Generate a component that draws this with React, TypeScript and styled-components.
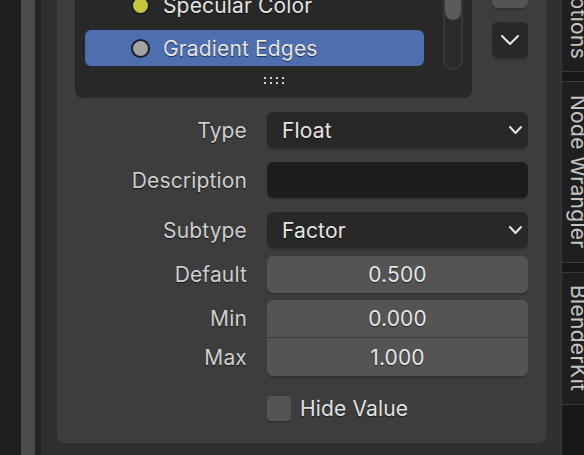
import React from 'react';
import styled, { createGlobalStyle } from 'styled-components';

const Global = createGlobalStyle`
  html, body { margin: 0; padding: 0; background: #303030; overflow: hidden; }
  body { font-family: Inter, "DejaVu Sans", sans-serif; letter-spacing: 0.15px; }
  * { box-sizing: border-box; }
`;

const Screen = styled.div`
  display: flex;
  width: 584px;
  height: 455px;
  overflow: hidden;
  background: #303030;
`;

const Strip = styled.div<{ $w: number; $c: string }>`
  flex-shrink: 0;
  width: ${p => p.$w}px;
  background: ${p => p.$c};
`;

const Region = styled.div`
  flex: 1;
  min-width: 0;
  background: #303030;
  padding: 0 15px 0 16px;
`;

const Panel = styled.section`
  margin-top: -40px;
  background: #3d3d3d;
  border-radius: 0 0 8px 8px;
  padding: 0 18px 22px;
  display: flex;
  flex-direction: column;
`;

const ListSection = styled.div`
  display: flex;
  gap: 20px;
  align-items: flex-start;
`;

const ListBox = styled.div`
  width: 397px;
  background: #282828;
  border-radius: 0 0 8px 8px;
  padding: 27px 9px 0 10px;
  display: flex;
  flex-direction: column;
`;

const ListBody = styled.div`
  display: flex;
  align-items: flex-start;
`;

const Rows = styled.div`
  width: 339px;
  display: flex;
  flex-direction: column;
  gap: 7px;
`;

const Row = styled.div<{ $active?: boolean }>`
  height: 36px;
  border-radius: 6px;
  background: ${p => (p.$active ? '#4e6faf' : 'transparent')};
  display: flex;
  align-items: center;
  padding-left: 46px;
  gap: 13px;
  font-size: 21px;
  color: #e4e4e4;
  text-shadow: 0 1px 1px rgba(0, 0, 0, 0.6);
`;

const SocketDot = styled.span<{ $color: string }>`
  width: 19px;
  height: 19px;
  border-radius: 50%;
  background: ${p => p.$color};
  border: 2px solid #1a1f2a;
  flex-shrink: 0;
`;

const ScrollTrack = styled.div`
  margin-left: 19px;
  margin-bottom: -4px;
  width: 20px;
  height: 83px;
  border: 2px solid #383838;
  border-radius: 10px;
  background: #2a2a2a;
  display: flex;
  justify-content: center;
`;

const ScrollThumb = styled.div`
  width: 16px;
  height: 31px;
  background: #5a5a5a;
  border-radius: 0 0 8px 8px;
`;

const Grip = styled.div`
  height: 32px;
  display: flex;
  justify-content: center;
  padding-top: 10px;
`;

const SideButtons = styled.div`
  width: 36px;
  padding-top: 12px;
  display: flex;
  flex-direction: column;
  gap: 14px;
`;

const SideButton = styled.div<{ $bg: string }>`
  height: 36px;
  border-radius: 6px;
  background: ${p => p.$bg};
  box-shadow: 0 2px 1px rgba(0, 0, 0, 0.18);
  display: flex;
  align-items: center;
  justify-content: center;
`;

const Form = styled.div`
  margin-top: 14px;
  display: flex;
  flex-direction: column;
`;

const FieldRow = styled.div<{ $mt: number }>`
  display: grid;
  grid-template-columns: 172px 261px;
  column-gap: 20px;
  align-items: center;
  margin-top: ${p => p.$mt}px;
`;

const Label = styled.div`
  text-align: right;
  font-size: 21px;
  color: #cfcfcf;
  text-shadow: 0 1px 1px rgba(0, 0, 0, 0.65);
`;

const Dropdown = styled.div`
  height: 36px;
  border-radius: 6px;
  background: #282828;
  box-shadow: 0 2px 1px rgba(0, 0, 0, 0.18);
  display: flex;
  align-items: center;
  justify-content: space-between;
  padding: 0 5px 0 15px;
  font-size: 21px;
  color: #e6e6e6;
  text-shadow: 0 1px 1px rgba(0, 0, 0, 0.6);
`;

const TextInput = styled.div`
  height: 36px;
  border-radius: 6px;
  background: #1d1d1d;
  box-shadow: 0 2px 1px rgba(0, 0, 0, 0.12);
`;

const NumberField = styled.div<{ $join?: 'top' | 'bottom' }>`
  height: ${p => (p.$join === 'bottom' ? 38 : 37)}px;
  background: #545454;
  border-radius: ${p =>
    p.$join === 'top' ? '6px 6px 0 0' : p.$join === 'bottom' ? '0 0 6px 6px' : '6px'};
  box-shadow: ${p => (p.$join === 'top' ? 'none' : '0 2px 1px rgba(0, 0, 0, 0.18)')};
  display: flex;
  align-items: center;
  justify-content: center;
  font-size: 21px;
  color: #e6e6e6;
  text-shadow: 0 1px 1px rgba(0, 0, 0, 0.6);
`;

const CheckLine = styled.div`
  display: flex;
  align-items: center;
  gap: 9px;
  font-size: 21px;
  color: #e2e2e2;
  text-shadow: 0 1px 1px rgba(0, 0, 0, 0.6);
`;

const CheckBox = styled.span`
  width: 24px;
  height: 25px;
  border-radius: 4px;
  background: #545454;
  box-shadow: 0 2px 1px rgba(0, 0, 0, 0.18);
`;

const TabColumn = styled.div`
  flex-shrink: 0;
  width: 23px;
  overflow: hidden;
  background: #181818;
  border-left: 1px solid #3a3a3a;
`;

const TabList = styled.div`
  margin-top: -33px;
  margin-left: -1px;
  display: flex;
  flex-direction: column;
  gap: 9px;
`;

const Tab = styled.div<{ $h: number }>`
  width: 35px;
  height: ${p => p.$h}px;
  background: #1f1f1f;
  border-top: 1px solid #3a3a3a;
  border-bottom: 1px solid #3a3a3a;
  display: flex;
  align-items: center;
  justify-content: center;
`;

const TabLabel = styled.span`
  writing-mode: vertical-rl;
  font-size: 21px;
  letter-spacing: 0.3px;
  color: #c4c4c4;
  white-space: nowrap;
`;

const Chevron = ({ w, h }: { w: number; h: number }) => (
  <svg width={w + 4} height={h + 4} viewBox={`-2 -2 ${w + 4} ${h + 4}`}>
    <path
      d={`M0 0 L${w / 2} ${h} L${w} 0`}
      fill="none"
      stroke="#e8e8e8"
      strokeWidth={2}
      strokeLinecap="round"
      strokeLinejoin="round"
    />
  </svg>
);

const GripDots = () => (
  <svg width="22" height="9" viewBox="0 0 22 9">
    {[0, 1].map(r =>
      [0, 1, 2, 3].map(c => (
        <rect key={`${r}-${c}`} x={1 + c * 6} y={1 + r * 5} width="2" height="2" fill="#d0d0d0" />
      ))
    )}
  </svg>
);

export default function App() {
  return (
    <Screen>
      <Global />
      <Strip $w={21} $c="#1e1e1e" />
      <Strip $w={14} $c="#4b4b4b" />
      <Strip $w={6} $c="#232323" />
      <Region>
        <Panel>
          <ListSection>
            <ListBox>
              <ListBody>
                <Rows>
                  <Row>
                    <SocketDot $color="#c7c73c" />
                    Specular Color
                  </Row>
                  <Row $active>
                    <SocketDot $color="#a3a3a3" />
                    Gradient Edges
                  </Row>
                </Rows>
                <ScrollTrack>
                  <ScrollThumb />
                </ScrollTrack>
              </ListBody>
              <Grip>
                <GripDots />
              </Grip>
            </ListBox>
            <SideButtons>
              <SideButton $bg="#545454" />
              <SideButton $bg="#282828">
                <Chevron w={16} h={8} />
              </SideButton>
            </SideButtons>
          </ListSection>
          <Form>
            <FieldRow $mt={0}>
              <Label>Type</Label>
              <Dropdown>
                Float
                <Chevron w={11} h={6} />
              </Dropdown>
            </FieldRow>
            <FieldRow $mt={14}>
              <Label>Description</Label>
              <TextInput />
            </FieldRow>
            <FieldRow $mt={14}>
              <Label>Subtype</Label>
              <Dropdown>
                Factor
                <Chevron w={11} h={6} />
              </Dropdown>
            </FieldRow>
            <FieldRow $mt={8}>
              <Label>Default</Label>
              <NumberField>0.500</NumberField>
            </FieldRow>
            <FieldRow $mt={7}>
              <Label>Min</Label>
              <NumberField $join="top">0.000</NumberField>
            </FieldRow>
            <FieldRow $mt={1}>
              <Label>Max</Label>
              <NumberField $join="bottom">1.000</NumberField>
            </FieldRow>
            <FieldRow $mt={20}>
              <span />
              <CheckLine>
                <CheckBox />
                Hide Value
              </CheckLine>
            </FieldRow>
          </Form>
        </Panel>
      </Region>
      <TabColumn>
        <TabList>
          <Tab $h={105}>
            <TabLabel>Options</TabLabel>
          </Tab>
          <Tab $h={182}>
            <TabLabel>Node Wrangler</TabLabel>
          </Tab>
          <Tab $h={133}>
            <TabLabel>BlenderKit</TabLabel>
          </Tab>
        </TabList>
      </TabColumn>
    </Screen>
  );
}
